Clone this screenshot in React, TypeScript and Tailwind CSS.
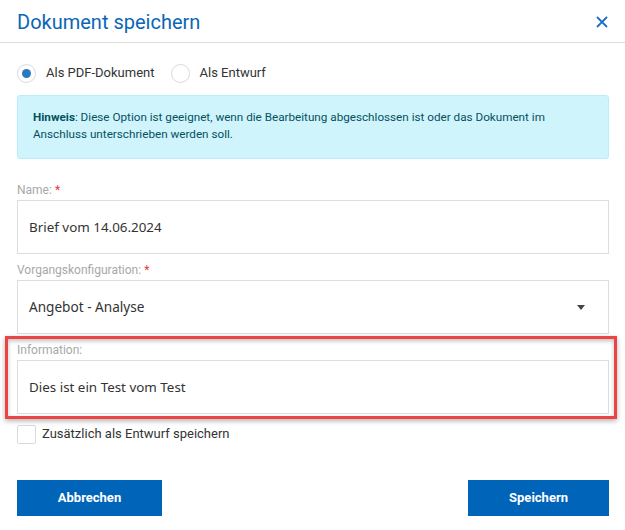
import React from "react";

const inputFont = { fontFamily: '"Noto Sans", "Open Sans", sans-serif' };

export default function App() {
  return (
    <div className="w-[625px] h-[530px] bg-white relative overflow-hidden" style={{ fontFamily: 'Roboto, "Liberation Sans", sans-serif' }}>
      <div className="h-[43px] border-b border-[#dcdcdc] flex items-center justify-between pl-[17px] pr-[17px]">
        <div className="text-[20px] text-[#0a66b5] leading-none pt-[1px]">Dokument speichern</div>
        <svg width="12" height="12" viewBox="0 0 12 12" className="mt-[2px]">
          <path d="M1 1 L11 11 M11 1 L1 11" stroke="#1b6fc0" strokeWidth="1.8" />
        </svg>
      </div>
      <div className="pl-[17px] pr-[16px]">
        <div className="flex items-center h-[20px] mt-[20px]">
          <div className="w-[19px] h-[19px] rounded-full border border-[#dadada] flex items-center justify-center">
            <div className="w-[9px] h-[9px] rounded-full bg-[#2a78bd]" />
          </div>
          <span className="ml-[10px] text-[13px] text-[#333]">Als PDF-Dokument</span>
          <div className="ml-[16px] w-[19px] h-[19px] rounded-full border border-[#dadada]" />
          <span className="ml-[10px] text-[13px] text-[#333]">Als Entwurf</span>
        </div>
        <div className="mt-[12px] h-[64px] rounded-[3px] border border-[#b6effb] bg-[#cff4fc] pl-[15px] pr-[20px] pt-[13px] text-[11.7px] leading-[16.5px] text-[#055160]">
          <span className="font-bold">Hinweis</span>: Diese Option ist geeignet, wenn die Bearbeitung abgeschlossen ist oder das Dokument im Anschluss unterschrieben werden soll.
        </div>
        <div className="mt-[21px]">
          <div className="h-[20px] flex items-center pb-[1px] text-[12px] text-[#a8a8a8]">
            Name:<span className="text-[#e03c3c] ml-[3px]">*</span>
          </div>
          <div className="h-[54px] border border-[#dddddd] flex items-center px-[11px] text-[13.4px] text-[#333]" style={inputFont}>
            Brief vom 14.06.2024
          </div>
        </div>
        <div className="mt-[6px]">
          <div className="h-[20px] flex items-center pb-[1px] text-[12px] text-[#a8a8a8]">
            Vorgangskonfiguration:<span className="text-[#e03c3c] ml-[3px]">*</span>
          </div>
          <div className="h-[54px] border border-[#dddddd] flex items-center justify-between px-[11px] pr-[23px] text-[13.6px] text-[#333]" style={inputFont}>
            <span>Angebot - Analyse</span>
            <svg width="8" height="5" viewBox="0 0 8 5"><path d="M0 0 L8 0 L4 5 Z" fill="#444" /></svg>
          </div>
        </div>
        <div className="mt-[6px] relative">
          <div className="h-[20px] flex items-center pb-[1px] text-[12px] text-[#a8a8a8]">
            Information:
          </div>
          <div className="h-[54px] border border-[#dddddd] flex items-center px-[11px] text-[13.4px] text-[#333]" style={inputFont}>
            Dies ist ein Test vom Test
          </div>
          <div className="absolute left-[-12px] right-[-8px] top-[-4px] bottom-[-5px] border-[3px] border-[#ec4444] shadow-[inset_0_2px_4px_rgba(0,0,0,0.25),0_2px_5px_rgba(0,0,0,0.3)] pointer-events-none" />
        </div>
        <div className="mt-[10px] flex items-center h-[20px]">
          <div className="w-[19px] h-[19px] border border-[#dadada] rounded-[2px]" />
          <span className="ml-[6px] text-[13px] text-[#333]">Zusätzlich als Entwurf speichern</span>
        </div>
        <div className="mt-[36px] flex justify-between">
          <button className="w-[145px] h-[36px] bg-[#0064b9] text-white text-[13px] font-bold">Abbrechen</button>
          <button className="w-[141px] h-[36px] bg-[#0064b9] text-white text-[13px] font-bold">Speichern</button>
        </div>
      </div>
    </div>
  );
}
